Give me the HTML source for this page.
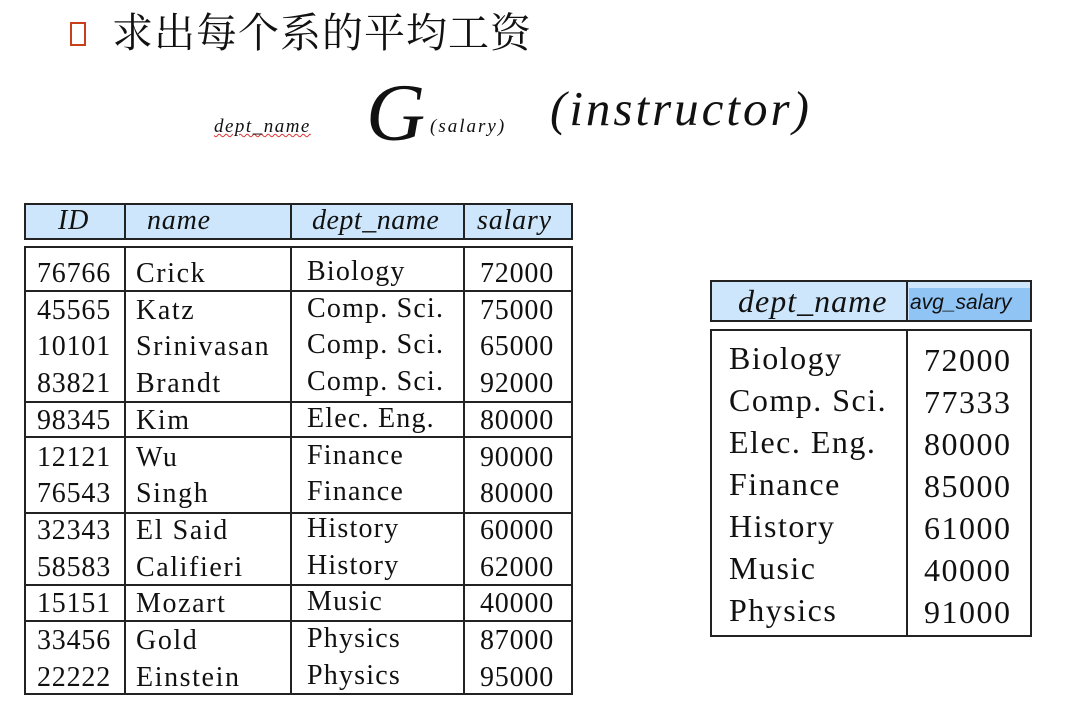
<!DOCTYPE html>
<html><head><meta charset="utf-8"><style>
body{margin:0;width:1079px;height:728px;background:#fff;position:relative;overflow:hidden;font-family:"Liberation Serif",serif;color:#111}
.a{position:absolute;white-space:nowrap}
.l{position:absolute;background:#222}
.t{font-size:28px;line-height:36px;letter-spacing:0.8px}
.r{font-size:32px;line-height:42px;letter-spacing:1.5px}
</style></head><body>
<div class="a" style="left:70px;top:22px;width:12px;height:20px;border:2px solid #c8401a"></div>
<div class="a" style="left:112px;top:8px;font-size:41px;line-height:50px;font-family:'Liberation Serif','Noto Serif CJK SC',serif;letter-spacing:1px;color:#111">求出每个系的平均工资</div>
<div class="a" style="left:214px;top:116px;font-size:19px;font-style:italic;letter-spacing:1.5px;text-decoration:underline wavy #d33;text-decoration-thickness:1px">dept_name</div>
<div class="a" style="left:366px;top:68px;font-size:82px;font-style:italic;line-height:90px">G</div>
<div class="a" style="left:430px;top:116px;font-size:19px;font-style:italic;letter-spacing:2px">(salary)</div>
<div class="a" style="left:550px;top:80px;font-size:49px;font-style:italic;letter-spacing:3px">(instructor)</div>

<!-- left table -->
<div class="a" style="left:24px;top:203px;width:548px;height:36px;background:#cde6fb"></div>
<div class="l" style="left:24px;top:203px;width:549px;height:2px"></div>
<div class="l" style="left:24px;top:238px;width:549px;height:2px"></div>
<div class="l" style="left:24px;top:246px;width:549px;height:2px"></div>
<div class="l" style="left:24px;top:693px;width:549px;height:2px"></div>
<div class="l" style="left:24px;top:203px;width:2px;height:37px"></div>
<div class="l" style="left:124px;top:203px;width:2px;height:37px"></div>
<div class="l" style="left:290px;top:203px;width:2px;height:37px"></div>
<div class="l" style="left:463px;top:203px;width:2px;height:37px"></div>
<div class="l" style="left:571px;top:203px;width:2px;height:37px"></div>
<div class="l" style="left:24px;top:246px;width:2px;height:449px"></div>
<div class="l" style="left:124px;top:246px;width:2px;height:449px"></div>
<div class="l" style="left:290px;top:246px;width:2px;height:449px"></div>
<div class="l" style="left:463px;top:246px;width:2px;height:449px"></div>
<div class="l" style="left:571px;top:246px;width:2px;height:449px"></div>
<div class="l" style="left:24px;top:290px;width:549px;height:2px"></div>
<div class="l" style="left:24px;top:401px;width:549px;height:2px"></div>
<div class="l" style="left:24px;top:436px;width:549px;height:2px"></div>
<div class="l" style="left:24px;top:512px;width:549px;height:2px"></div>
<div class="l" style="left:24px;top:584px;width:549px;height:2px"></div>
<div class="l" style="left:24px;top:620px;width:549px;height:2px"></div>
<div class="a t" style="left:58px;top:203px;font-style:italic">ID</div>
<div class="a t" style="left:147px;top:203px;font-style:italic">name</div>
<div class="a t" style="left:312px;top:203px;font-style:italic;letter-spacing:0.5px">dept_name</div>
<div class="a t" style="left:477px;top:203px;font-style:italic">salary</div>
<div class="a t" style="left:37px;top:256px;line-height:36.7px">76766<br>45565<br>10101<br>83821<br>98345<br>12121<br>76543<br>32343<br>58583<br>15151<br>33456<br>22222</div>
<div class="a t" style="left:136px;top:256px;line-height:36.7px;letter-spacing:1.6px">Crick<br>Katz<br>Srinivasan<br>Brandt<br>Kim<br>Wu<br>Singh<br>El Said<br>Califieri<br>Mozart<br>Gold<br>Einstein</div>
<div class="a t" style="left:307px;top:254px;line-height:36.7px;letter-spacing:1.2px">Biology<br>Comp. Sci.<br>Comp. Sci.<br>Comp. Sci.<br>Elec. Eng.<br>Finance<br>Finance<br>History<br>History<br>Music<br>Physics<br>Physics</div>
<div class="a t" style="left:480px;top:256px;line-height:36.7px">72000<br>75000<br>65000<br>92000<br>80000<br>90000<br>80000<br>60000<br>62000<br>40000<br>87000<br>95000</div>

<!-- right table -->
<div class="a" style="left:710px;top:280px;width:321px;height:41px;background:#cde6fb"></div>
<div class="a" style="left:909px;top:288px;width:121px;height:32px;background:#8fc4f4"></div>
<div class="l" style="left:710px;top:280px;width:322px;height:2px"></div>
<div class="l" style="left:710px;top:320px;width:322px;height:2px"></div>
<div class="l" style="left:710px;top:329px;width:322px;height:2px"></div>
<div class="l" style="left:710px;top:635px;width:322px;height:2px"></div>
<div class="l" style="left:710px;top:280px;width:2px;height:42px"></div>
<div class="l" style="left:906px;top:280px;width:2px;height:42px"></div>
<div class="l" style="left:1030px;top:280px;width:2px;height:42px"></div>
<div class="l" style="left:710px;top:329px;width:2px;height:308px"></div>
<div class="l" style="left:906px;top:329px;width:2px;height:308px"></div>
<div class="l" style="left:1030px;top:329px;width:2px;height:308px"></div>
<div class="a r" style="left:738px;top:280px;font-style:italic;letter-spacing:1px">dept_name</div>
<div class="a" style="left:910px;top:291px;font-size:21px;font-family:'Liberation Sans',sans-serif;font-style:italic;color:#111">avg_salary</div>
<div class="a r" style="left:729px;top:337px;line-height:42px">Biology<br>Comp. Sci.<br>Elec. Eng.<br>Finance<br>History<br>Music<br>Physics</div>
<div class="a r" style="left:924px;top:339px;line-height:42px">72000<br>77333<br>80000<br>85000<br>61000<br>40000<br>91000</div>
</body></html>
